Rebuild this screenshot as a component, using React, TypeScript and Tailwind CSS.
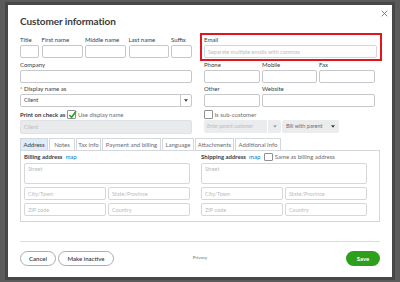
import type { ReactNode } from 'react';

const labelCls = 'block h-[8px] text-[6px] leading-[8px] text-[#393a3d] whitespace-nowrap';
const inputCls =
  'block w-full h-[13px] border border-[#c6c8cc] rounded-[2px] bg-white px-[3px] text-[5.5px] text-[#393a3d] placeholder:text-[#b8bcc2] outline-none';

function Caret({ className = '' }: { className?: string }) {
  return (
    <svg viewBox="0 0 6 4" className={`w-[4px] h-[3px] ${className}`}>
      <path d="M0 0h6L3 4z" fill="#393a3d" />
    </svg>
  );
}

function Field({ label, placeholder, className = '' }: { label: ReactNode; placeholder?: string; className?: string }) {
  return (
    <div className={className}>
      <span className={labelCls}>{label}</span>
      <input className={`mt-[1px] ${inputCls}`} placeholder={placeholder} />
    </div>
  );
}

function Checkbox({ checked }: { checked?: boolean }) {
  return (
    <span className="relative flex w-[8.5px] h-[8.5px] shrink-0 border border-[#8d9096] rounded-[1px] bg-white">
      {checked && (
        <svg viewBox="0 0 10 10" className="absolute -left-[0.5px] -top-[1px] w-[9px] h-[9px]">
          <path d="M1.5 5.5l2.5 2.5L9 1.5" fill="none" stroke="#2ca01c" strokeWidth="1.8" />
        </svg>
      )}
    </span>
  );
}

function AddressBlock({ title, extra }: { title: string; extra?: ReactNode }) {
  return (
    <div className="w-[166px]">
      <div className="flex items-center h-[8px] text-[6px] leading-[8px] whitespace-nowrap">
        <span className="font-bold">{title}</span>
        <span className="ml-[3px] text-[#0077c5]">map</span>
        {extra}
      </div>
      <textarea
        className="mt-[2px] block w-full h-[21px] resize-none border border-[#d4d7dc] rounded-[2px] px-[3px] py-[2px] text-[5.5px] leading-[7px] placeholder:text-[#b8bcc2] outline-none"
        placeholder="Street"
      />
      <div className="mt-[3px] grid grid-cols-2 gap-x-[2px] gap-y-[3px]">
        <input className={`${inputCls} border-[#d4d7dc]`} placeholder="City/Town" />
        <input className={`${inputCls} border-[#d4d7dc]`} placeholder="State/Province" />
        <input className={`${inputCls} border-[#d4d7dc]`} placeholder="ZIP code" />
        <input className={`${inputCls} border-[#d4d7dc]`} placeholder="Country" />
      </div>
    </div>
  );
}

const tabs = [
  { name: 'Address', w: 'w-[28px]' },
  { name: 'Notes', w: 'w-[26px]' },
  { name: 'Tax info', w: 'w-[25px]' },
  { name: 'Payment and billing', w: 'w-[59px]' },
  { name: 'Language', w: 'w-[32px]' },
  { name: 'Attachments', w: 'w-[39px]' },
  { name: 'Additional Info', w: 'w-[46px]' },
];

export default function App() {
  return (
    <div className="w-[400px] h-[282px] overflow-hidden bg-[#5b5b5b] pt-[5px] pl-[8px] font-['Lato','Liberation_Sans',sans-serif] text-[#393a3d]">
      <div className="relative w-[384px] h-[272px] bg-white px-[12px] pt-[10px] shadow-[0_0_0_3px_#474747]">
        <button type="button" className="absolute top-[5px] right-[4px] w-[7px] h-[7px]">
          <svg viewBox="0 0 10 10" className="w-[7px] h-[7px]">
            <path d="M1 1l8 8M9 1l-8 8" stroke="#6b6c72" strokeWidth="1.2" />
          </svg>
        </button>

        <h1 className="text-[10px] leading-[12px] font-bold tracking-[-0.1px]">Customer information</h1>

        <div className="mt-[6px] flex gap-[8px]">
          {/* left column */}
          <div className="w-[172px] shrink-0 pt-[3px]">
            <div className="grid grid-cols-[19px_41px_41px_40px_1fr] gap-x-[2.5px]">
              <Field label="Title" />
              <Field label="First name" />
              <Field label="Middle name" />
              <Field label="Last name" />
              <Field label="Suffix" />
            </div>
            <Field label="Company" className="mt-[3px]" />
            <div className="mt-[2px]">
              <span className={labelCls}>
                <span className="text-[#d52b1e]">*</span> Display name as
              </span>
              <div className="mt-[1px] flex h-[13px] border border-[#c6c8cc] rounded-[2px] text-[5.5px] leading-[11px]">
                <span className="flex-1 px-[3px]">Client</span>
                <span className="flex items-center justify-center w-[11px] border-l border-[#c6c8cc]">
                  <Caret />
                </span>
              </div>
            </div>
            <div className="mt-[3px] flex items-center h-[9px] text-[6px] whitespace-nowrap">
              <span className="font-bold">Print on check as</span>
              <span className="ml-[2px]"><Checkbox checked /></span>
              <span className="ml-[2px] text-[#6b6c72]">Use display name</span>
            </div>
            <div className="mt-[1px] h-[14px] rounded-[2px] bg-[#e9eaec] border border-[#e0e1e3] px-[3px] text-[5.5px] leading-[12px] text-[#b8bcc2]">
              Client
            </div>
          </div>

          {/* right column */}
          <div className="w-[182px] shrink-0">
            <div className="h-[28px] border-2 border-[#e3151c] pt-[1px] pl-[2px] pr-[3.5px]">
              <span className={labelCls}>Email</span>
              <input
                className={`mt-[1px] ${inputCls} h-[12px] border-[#d4d7dc]`}
                placeholder="Separate multiple emails with commas"
              />
            </div>
            <div className="pl-[4px]">
              <div className="grid grid-cols-[56px_55px_56px] gap-x-[2px]">
                <Field label="Phone" />
                <Field label="Mobile" />
                <Field label="Fax" />
              </div>
              <div className="mt-[2px] grid grid-cols-[56px_113px] gap-x-[2px]">
                <Field label="Other" />
                <Field label="Website" />
              </div>
              <div className="mt-[3px] flex items-center h-[9px] text-[6px] text-[#6b6c72] whitespace-nowrap">
                <Checkbox />
                <span className="ml-[2px]">Is sub-customer</span>
              </div>
              <div className="mt-[1px] flex h-[13px] text-[5px] leading-[13px] whitespace-nowrap">
                <span className="w-[63px] bg-[#ebecee] rounded-l-[2px] px-[3px] italic text-[#b8bcc2]">Enter parent customer</span>
                <span className="w-[13px] ml-px bg-[#ebecee] rounded-r-[2px] flex items-center justify-center">
                  <Caret className="opacity-40" />
                </span>
                <span className="ml-[1px] w-[57px] bg-[#ebecee] rounded-[2px] pl-[4px] pr-[4px] flex items-center justify-between text-[5.5px] text-[#6b6c72]">
                  Bill with parent
                  <Caret />
                </span>
              </div>
            </div>
          </div>
        </div>

        {/* tabs */}
        <div className="mt-[3.5px] flex gap-[1px] h-[12.5px]">
          {tabs.map((t, i) => (
            <div
              key={t.name}
              className={`${t.w} flex items-center justify-center border border-b-0 border-[#d4d7dc] text-[6px] whitespace-nowrap ${
                i === 0 ? 'bg-[#dcecf9] text-[#393a3d]' : 'bg-white text-[#6b6c72]'
              }`}
            >
              {t.name}
            </div>
          ))}
        </div>
        <div className="h-[72px] border border-[#d4d7dc] pl-[3px] pt-[2px] flex gap-[11px]">
          <AddressBlock title="Billing address" />
          <AddressBlock
            title="Shipping address"
            extra={
              <span className="ml-[4px] flex items-center text-[#6b6c72]">
                <Checkbox />
                <span className="ml-[2px]">Same as billing address</span>
              </span>
            }
          />
        </div>

        {/* footer */}
        <div className="mt-[19px] h-px bg-[#dcdde0]" />
        <div className="mt-[9px] grid grid-cols-3 items-center">
          <div className="flex gap-[2px]">
            <button type="button" className="w-[36px] h-[14.5px] rounded-full border border-[#a9acb1] text-[6px] font-semibold">
              Cancel
            </button>
            <button type="button" className="w-[56px] h-[14.5px] rounded-full border border-[#a9acb1] text-[6px] font-semibold">
              Make inactive
            </button>
          </div>
          <span className="justify-self-center text-[4.5px] text-[#6b6c72]">Privacy</span>
          <button type="button" className="justify-self-end w-[34px] h-[14.5px] rounded-full bg-[#2ca01c] text-white text-[6px] font-bold">
            Save
          </button>
        </div>
      </div>
    </div>
  );
}
